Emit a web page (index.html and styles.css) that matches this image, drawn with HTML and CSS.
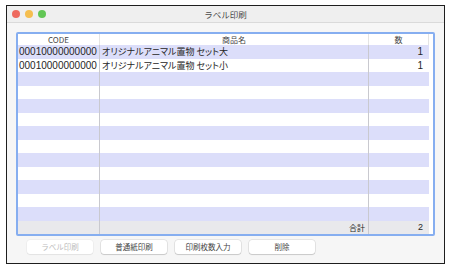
FILE: index.html
```html
<!DOCTYPE html>
<html lang="ja">
<head>
<meta charset="utf-8">
<title>ラベル印刷</title>
<link rel="stylesheet" href="styles.css">
</head>
<body>
<div class="window">
  <div class="titlebar">
    <div class="lights">
      <span class="light red"></span>
      <span class="light yellow"></span>
      <span class="light green"></span>
    </div>
    <div class="title">ラベル印刷</div>
  </div>
  <div class="content">
    <div class="table">
      <div class="row head">
        <div class="c code center">CODE</div>
        <div class="c name center">商品名</div>
        <div class="c qty center">数</div>
        <div class="c pad"></div>
      </div>
      <div class="row odd">
        <div class="c code">00010000000000</div>
        <div class="c name jp">オリジナルアニマル置物 セット大</div>
        <div class="c qty num">1</div>
        <div class="c pad"></div>
      </div>
      <div class="row">
        <div class="c code">00010000000000</div>
        <div class="c name jp">オリジナルアニマル置物 セット小</div>
        <div class="c qty num">1</div>
        <div class="c pad"></div>
      </div>
      <div class="row odd"><div class="c code"></div><div class="c name"></div><div class="c qty"></div><div class="c pad"></div></div>
      <div class="row"><div class="c code"></div><div class="c name"></div><div class="c qty"></div><div class="c pad"></div></div>
      <div class="row odd"><div class="c code"></div><div class="c name"></div><div class="c qty"></div><div class="c pad"></div></div>
      <div class="row"><div class="c code"></div><div class="c name"></div><div class="c qty"></div><div class="c pad"></div></div>
      <div class="row odd"><div class="c code"></div><div class="c name"></div><div class="c qty"></div><div class="c pad"></div></div>
      <div class="row"><div class="c code"></div><div class="c name"></div><div class="c qty"></div><div class="c pad"></div></div>
      <div class="row odd"><div class="c code"></div><div class="c name"></div><div class="c qty"></div><div class="c pad"></div></div>
      <div class="row"><div class="c code"></div><div class="c name"></div><div class="c qty"></div><div class="c pad"></div></div>
      <div class="row odd"><div class="c code"></div><div class="c name"></div><div class="c qty"></div><div class="c pad"></div></div>
      <div class="row"><div class="c code"></div><div class="c name"></div><div class="c qty"></div><div class="c pad"></div></div>
      <div class="row odd"><div class="c code"></div><div class="c name"></div><div class="c qty"></div><div class="c pad"></div></div>
      <div class="row foot">
        <div class="c code"></div>
        <div class="c name num">合計</div>
        <div class="c qty num">2</div>
        <div class="c pad"></div>
      </div>
    </div>
    <div class="buttons">
      <button class="btn" disabled>ラベル印刷</button>
      <button class="btn">普通紙印刷</button>
      <button class="btn">印刷枚数入力</button>
      <button class="btn">削除</button>
    </div>
  </div>
</div>
</body>
</html>
```

FILE: styles.css
```css
* { box-sizing: border-box; }
html, body { margin: 0; padding: 0; background: #ffffff; }
body {
  font-family: "Liberation Sans", "Noto Sans CJK JP", sans-serif;
  color: #262626;
}
.window {
  margin: 5px 0 0 6px;
  width: 439px;
  height: 259px;
  border: 1px solid #1e1e1e;
  background: #f6f6f6;
  display: flex;
  flex-direction: column;
}
.titlebar {
  height: 17px;
  border-bottom: 1px solid #dadada;
  background: #efefef;
  display: grid;
  grid-template-columns: 1fr auto 1fr;
  align-items: center;
}
.lights {
  display: flex;
  gap: 5px;
  padding-left: 5px;
}
.light {
  width: 8px;
  height: 8px;
  border-radius: 50%;
  display: block;
}
.red { background: #ee6a5f; }
.yellow { background: #f5be4f; }
.green { background: #62c655; }
.title {
  font-family: "Noto Sans CJK JP", sans-serif;
  font-size: 8.5px;
  color: #4a4a4a;
}
.content {
  padding: 9px 9px 0 9px;
}
.table {
  border: 2px solid #86aef0;
  border-radius: 2px;
  background: #ffffff;
}
.row {
  display: grid;
  grid-template-columns: 82px 269px 60px 4px;
  height: 13.5px;
  font-size: 10px;
  line-height: 13.5px;
}
.row.odd { background: #dcdefa; }
.row.odd .pad { background: #ffffff; }
.row.head {
  height: 11px;
  line-height: 11px;
  font-size: 8px;
  font-family: "Noto Sans CJK JP", sans-serif;
}
.row.foot {
  background: #e9e9ec;
  font-size: 9px;
}
.row.foot .pad { background: #ffffff; }
.c {
  white-space: nowrap;
  overflow: hidden;
}
.code {
  border-right: 1px solid #c9c9cf;
  padding-left: 1px;
}
.name {
  border-right: 1px solid #c9c9cf;
  padding-left: 2px;
}
.head .code, .head .name { border-right-color: #e4e4e4; }
.head .qty { border-right: 1px solid #e4e4e4; }
.head .c { color: #454545; }
.qty { padding-right: 6px; }
.center { text-align: center; padding-left: 0; padding-right: 0; }
.num { text-align: right; }
.name.num { padding-right: 3px; font-family: "Noto Sans CJK JP", sans-serif; font-size: 8px; }
.jp {
  font-family: "Noto Sans CJK JP", sans-serif;
  font-size: 9px;
  font-feature-settings: "palt";
}
.buttons {
  display: flex;
  gap: 8px;
  margin: 4px 0 0 11px;
}
.btn {
  width: 66px;
  height: 14px;
  padding: 0;
  border: none;
  border-radius: 3px;
  background: #ffffff;
  box-shadow: 0 0 0 0.5px rgba(0, 0, 0, 0.14), 0 1px 1px rgba(0, 0, 0, 0.12);
  font-family: "Noto Sans CJK JP", sans-serif;
  font-size: 7.5px;
  color: #444444;
  line-height: 14px;
}
.btn:disabled {
  color: #bdbdbd;
  box-shadow: 0 0 0 0.5px rgba(0, 0, 0, 0.06), 0 1px 1px rgba(0, 0, 0, 0.05);
}
```
